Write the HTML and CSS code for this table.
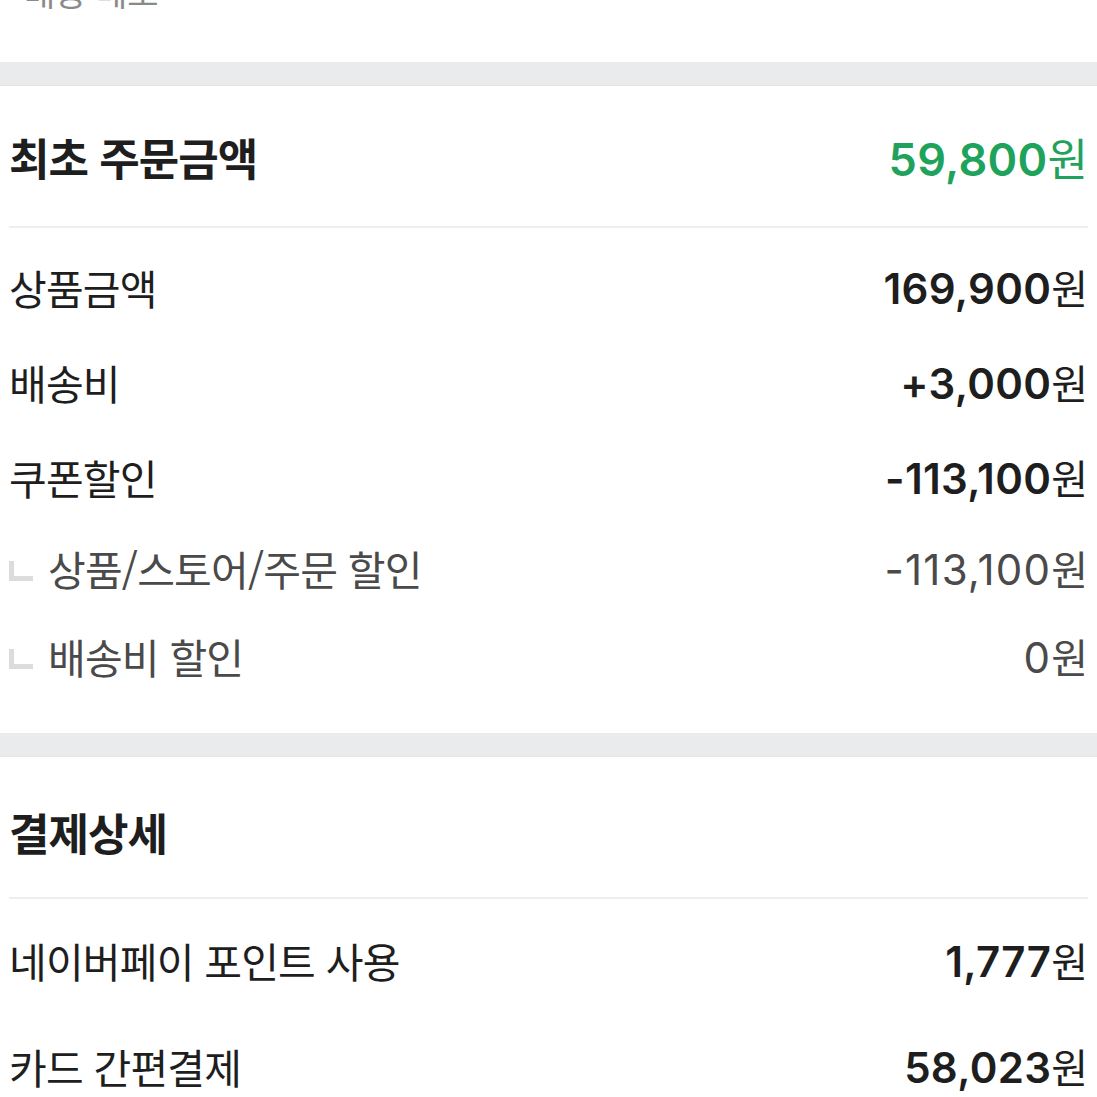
FILE: index.html
```html
<!DOCTYPE html>
<html lang="ko">
<head>
<meta charset="utf-8">
<title>결제 정보</title>
<link rel="stylesheet" href="styles.css">
</head>
<body>
<div class="page">
  <div class="top-stub"><span class="memo">배송 메모</span></div>
  <div class="band"></div>

  <section class="section first">
    <div class="head">
      <h2 class="title">최초 주문금액</h2>
      <span class="amount green"><b>59,800</b>원</span>
    </div>
    <div class="divider"></div>
    <div class="rows">
      <div class="row"><span class="label">상품금액</span><span class="amount"><b>169,900</b>원</span></div>
      <div class="row"><span class="label">배송비</span><span class="amount"><b>+3,000</b>원</span></div>
      <div class="row"><span class="label">쿠폰할인</span><span class="amount"><b>-113,100</b>원</span></div>
      <div class="row sub"><span class="label"><i class="corner"></i>상품/스토어/주문 할인</span><span class="amount"><span class="num">-113,100</span>원</span></div>
      <div class="row sub"><span class="label"><i class="corner"></i>배송비 할인</span><span class="amount"><span class="num">0</span>원</span></div>
    </div>
  </section>

  <div class="band"></div>

  <section class="section second">
    <div class="head">
      <h2 class="title">결제상세</h2>
    </div>
    <div class="divider"></div>
    <div class="rows">
      <div class="row tall"><span class="label">네이버페이 포인트 사용</span><span class="amount"><b>1,777</b>원</span></div>
      <div class="row tall"><span class="label">카드 간편결제</span><span class="amount"><b>58,023</b>원</span></div>
    </div>
  </section>
</div>
</body>
</html>
```

FILE: styles.css
```css
* { box-sizing: border-box; }
html, body { margin: 0; padding: 0; background: #fff; }
body {
  font-family: "Noto Sans CJK KR", "Noto Sans", sans-serif;
  color: #1f1f1f;
  overflow: hidden;
}
.page { width: 1097px; }

.top-stub {
  height: 62px;
  overflow: hidden;
}
.memo {
  display: block;
  margin-top: -28px;
  padding-left: 24px;
  font-size: 34px;
  line-height: 40px;
  color: #8a8a8a;
}

.band {
  height: 24px;
  background: #e9ebed;
  border-bottom: 1px solid #e2e4e6;
}

.section { padding: 0 9px; }
.first { padding-bottom: 33px; }

.head {
  height: 140px;
  display: flex;
  align-items: center;
  justify-content: space-between;
}
.first .head { padding-top: 2px; }
.second .head { padding-top: 10px; }

.title {
  margin: 0;
  font-size: 44px;
  font-weight: 700;
  letter-spacing: -1px;
  color: #1e1e1e;
}
.divider {
  height: 2px;
  background: #eeeeee;
}

.first .rows { padding-top: 11px; }
.second .rows { padding-top: 8px; }

.row {
  height: 95px;
  display: flex;
  align-items: center;
  justify-content: space-between;
}
.row.sub { height: 88px; }
.row.tall { height: 106px; }

.label {
  font-size: 41px;
  letter-spacing: -0.8px;
  color: #1e1e1e;
  display: flex;
  align-items: center;
}
.sub .label { color: #4a4a4a; }

.corner {
  display: inline-block;
  width: 24px;
  height: 20px;
  border-left: 5px solid #dcdcdc;
  border-bottom: 5px solid #dcdcdc;
  margin-right: 15px;
  margin-top: 6px;
}

.amount {
  font-size: 40px;
  color: #1e1e1e;
  font-weight: 400;
}
.amount b {
  font-family: Inter, "Noto Sans", sans-serif;
  font-weight: 600;
  font-size: 42px;
  letter-spacing: 0.3px;
}
.sub .amount { color: #4a4a4a; }
.amount .num {
  font-family: Inter, "Noto Sans", sans-serif;
  font-size: 42px;
  letter-spacing: 1.2px;
}
.green {
  font-size: 44px;
  color: #1fa35c;
}
.green b { font-size: 45px; letter-spacing: 0.3px; }
```
